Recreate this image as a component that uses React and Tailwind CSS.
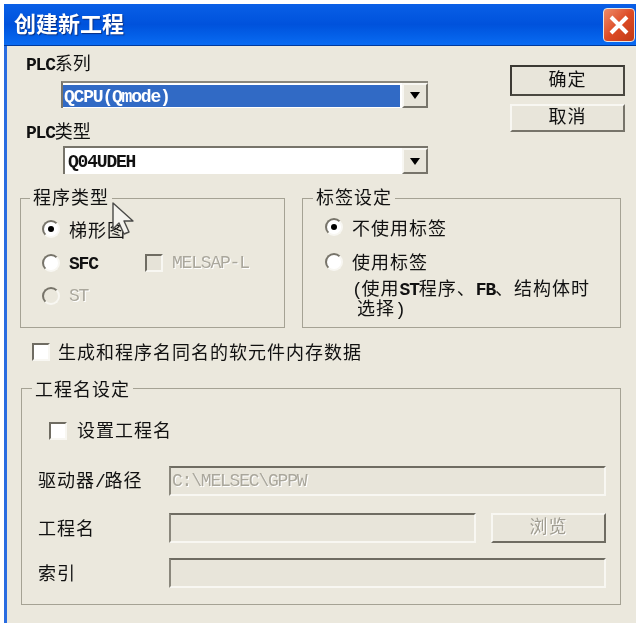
import React from 'react';

const ui = { fontFamily: '"Noto Sans CJK SC", "Liberation Sans", sans-serif' };

// half-width text, the dialog font is tall but runs at about 9.6px per character
function L({ children, className = 'font-bold' }) {
  return (
    <span className={`text-[18px] tracking-[-1.2px] ${className}`} style={{ fontFamily: '"Liberation Mono", monospace' }}>
      {children}
    </span>
  );
}

function Radio({ checked, disabled }) {
  return (
    <span className={`flex items-center justify-center w-[18px] h-[18px] rounded-full border-2 border-t-[#77746a] border-l-[#77746a] border-r-[#f8f7f2] border-b-[#f8f7f2] ${disabled ? 'bg-[#ebe8dd]' : 'bg-white'}`}>
      {checked && <span className="w-[6px] h-[6px] rounded-full bg-black" />}
    </span>
  );
}

function Check({ disabled }) {
  return (
    <span className={`block w-[18px] h-[18px] border-2 border-t-[#6f6c62] border-l-[#6f6c62] border-r-[#f8f7f2] border-b-[#f8f7f2] ${disabled ? 'bg-[#e6e3d8]' : 'bg-white'}`} />
  );
}

function Arrow() {
  return (
    <span className="flex items-center justify-center w-[26px] h-full bg-[#e8e5da] border-2 border-t-[#f8f7f2] border-l-[#f8f7f2] border-r-[#77746a] border-b-[#77746a]">
      <svg width="12" height="7" viewBox="0 0 12 7"><path d="M1 0h10L6 7z" fill="#000" /></svg>
    </span>
  );
}

function Legend({ children, className }) {
  return <div className={`w-fit h-5 leading-[18px] px-[3px] bg-[#ebe8dd] text-[18px] tracking-[1px] text-[#111] ${className}`}>{children}</div>;
}

const well = 'h-[30px] border-2 border-t-[#6f6c62] border-l-[#8a877c] border-r-[#f8f7f2] border-b-[#f8f7f2] bg-[#e8e5da]';

export default function App() {
  return (
    <div className="relative w-[640px] h-[631px] bg-white overflow-hidden" style={ui}>
      <div className="ml-1 pt-1 w-[632px] blur-[0.5px]">
        {/* Title bar */}
        <div className="flex items-center justify-between h-[42px] pl-[10px] pr-px bg-gradient-to-b from-[#0a5fe6] via-[#0052dc] to-[#0a6bf2] border-b border-[#003a9c]">
          <span className="pb-[5px] text-[22px] font-bold text-white leading-none [text-shadow:1px_1px_1px_#0a2f80]">创建新工程</span>
          <span className="flex items-center justify-center w-[32px] h-[34px] rounded-[4px] border border-[#e8e4e0] bg-gradient-to-br from-[#ec8a68] via-[#dd4b25] to-[#c23a16]">
            <svg width="22" height="22" viewBox="0 0 22 22"><path d="M3 3l16 16M19 3L3 19" stroke="#fff" strokeWidth="4" /></svg>
          </span>
        </div>

        {/* Dialog body */}
        <div className="h-[577px] border-l-[3px] border-[#2a6ce0] bg-[#ebe8dd] text-[#111] text-[18px] tracking-[1px]">
          <div className="flex">
            <div className="w-[503px]">
              <div className="ml-[19px] pt-[7px] h-[26px] leading-[18px] tracking-normal"><L>PLC</L>系列</div>
              <div className="ml-[54px] mt-[9px] flex w-[367px] h-[27px] border-t-2 border-l-2 border-t-[#8a877c] border-l-[#77746a] bg-white">
                <div className="flex-1 self-stretch mr-[2px] mb-[1px] mt-[2px] pl-[1px] leading-[18px] bg-[#316ac5] text-white"><L>QCPU(Qmode)</L></div>
                <Arrow />
              </div>
              <div className="ml-[19px] mt-[13px] h-[20px] leading-[18px] tracking-normal"><L>PLC</L>类型</div>
              <div className="ml-[56px] mt-[5px] flex w-[365px] h-[28px] border-t-2 border-l-2 border-t-[#77746a] border-l-[#77746a] bg-white">
                <div className="flex-1 pl-[3px] leading-[22px]"><L>Q04UDEH</L></div>
                <Arrow />
              </div>
            </div>
            <div className="pt-[19px]">
              <div className="flex items-center justify-center pb-[5px] w-[115px] h-[31px] border-2 border-[#3c3a34] border-r-[#4a4840] border-b-[#4a4840] bg-[#e8e5da]">确定</div>
              <div className="flex items-center justify-center pb-[5px] mt-[8px] w-[115px] h-[28px] border-2 border-t-[#f8f7f2] border-l-[#f8f7f2] border-r-[#77746a] border-b-[#77746a] bg-[#e8e5da]">取消</div>
            </div>
          </div>

          <div className="flex gap-[17px] ml-[13px] mt-[24px]">
            {/* Program type */}
            <div className="w-[265px] h-[130px] border border-[#a5a294]">
              <Legend className="-mt-[12px] ml-[9px]">程序类型</Legend>
              <div className="flex items-center gap-[9px] ml-[21px] mt-[12px] h-5"><Radio checked /><span>梯形图</span></div>
              <div className="flex items-center gap-[9px] ml-[21px] mt-[14px] h-5">
                <Radio />
                <span className="w-[67px]"><L>SFC</L></span>
                <Check disabled />
                <L className="text-[#aaa79c] [text-shadow:1px_1px_0_#fff]">MELSAP-L</L>
              </div>
              <div className="flex items-center gap-[9px] ml-[21px] mt-[13px] h-5"><Radio disabled /><L className="text-[#aaa79c] [text-shadow:1px_1px_0_#fff]">ST</L></div>
            </div>
            {/* Label setting */}
            <div className="w-[319px] h-[130px] border border-[#a5a294]">
              <Legend className="-mt-[12px] ml-[10px]">标签设定</Legend>
              <div className="flex items-center gap-[9px] ml-[22px] mt-[10px] h-5"><Radio checked /><span>不使用标签</span></div>
              <div className="flex items-center gap-[9px] ml-[22px] mt-[15px] h-5"><Radio /><span className="pb-[2px]">使用标签</span></div>
              <div className="ml-[49px] mt-[6px] h-5 leading-[18px] whitespace-nowrap">
                <L className="font-normal">(</L>使用<L>ST</L>程序、<L>FB</L>、结构体时
              </div>
              <div className="ml-[54px] h-5 leading-[18px] whitespace-nowrap">选择<L className="font-normal">)</L></div>
            </div>
          </div>

          <div className="flex items-center gap-[8px] ml-[25px] mt-[15px] h-[18px]">
            <Check />
            <span className="pb-[2px] whitespace-nowrap">生成和程序名同名的软元件内存数据</span>
          </div>

          {/* Project name */}
          <div className="ml-[14px] mt-[27px] w-[600px] h-[217px] border border-[#a5a294]">
            <Legend className="-mt-[10px] ml-[10px]">工程名设定</Legend>
            <div className="flex items-center gap-[10px] ml-[27px] mt-[22px] h-[19px]"><Check /><span className="pb-[2px]">设置工程名</span></div>
            <div className="flex items-center ml-[16px] mt-[26px] h-[30px]">
              <span className="w-[131px] pb-[2px] leading-[18px] whitespace-nowrap">驱动器<L className="font-normal">/</L>路径</span>
              <div className={`w-[437px] leading-[20px] pl-[1px] ${well}`}>
                <L className="font-normal text-[#aaa79c] [text-shadow:1px_1px_0_#fff]">C:\MELSEC\GPPW</L>
              </div>
            </div>
            <div className="flex items-center ml-[16px] mt-[17px] h-[30px]">
              <span className="w-[131px] pb-[2px] leading-[18px]">工程名</span>
              <div className={`w-[307px] ${well}`} />
              <div className="flex items-center justify-center pb-[5px] ml-[15px] w-[115px] h-[30px] border-2 border-t-[#f8f7f2] border-l-[#f8f7f2] border-r-[#6f6c62] border-b-[#6f6c62] bg-[#e8e5da] text-[#a09d92] [text-shadow:1px_1px_0_#fff]">浏览</div>
            </div>
            <div className="flex items-center ml-[16px] mt-[15px] h-[30px]">
              <span className="w-[131px] pb-[2px] leading-[18px]">索引</span>
              <div className={`w-[437px] ${well}`} />
            </div>
          </div>
        </div>
      </div>

      {/* Mouse pointer over the dialog */}
      <svg className="absolute left-[111px] top-[202px]" width="24" height="36" viewBox="0 0 24 36">
        <path d="M2 1v26l6-6 5 11 5-2-5-11h9z" fill="#f4f3ee" stroke="#4a4a48" strokeWidth="1.4" strokeLinejoin="round" />
      </svg>
    </div>
  );
}
